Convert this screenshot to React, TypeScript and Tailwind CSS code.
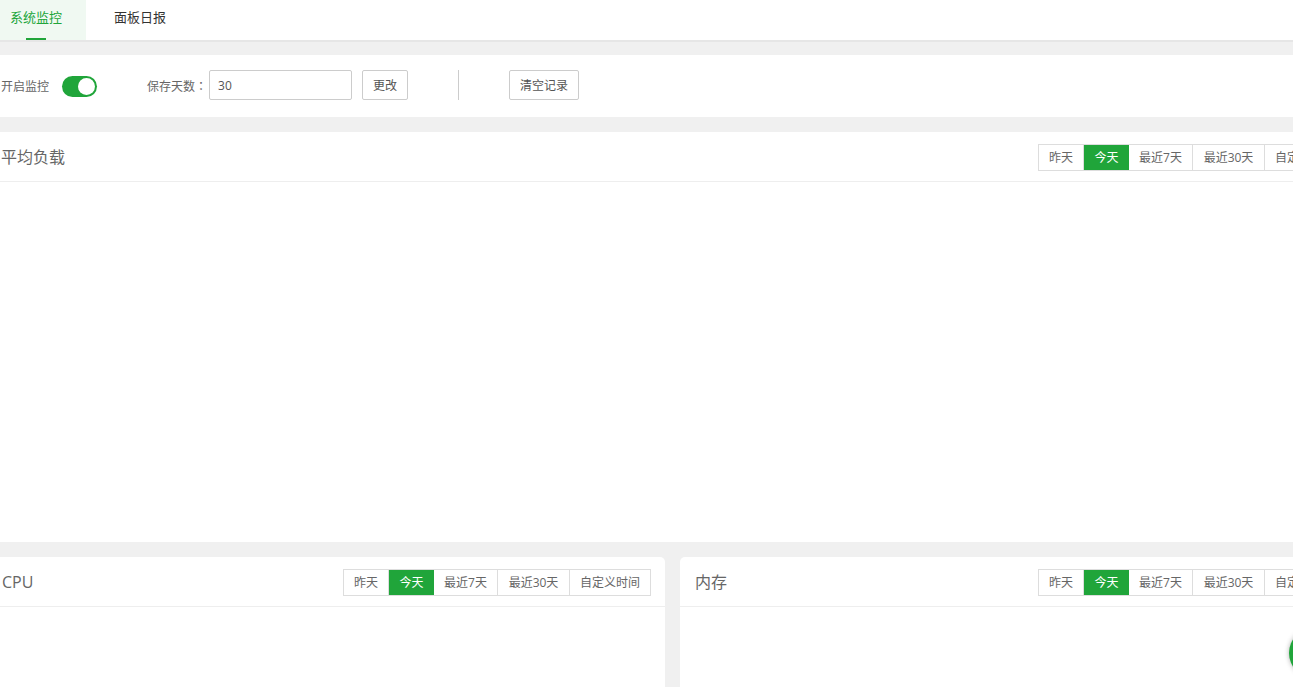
const ranges = [
  { label: "昨天", width: "w-[45px] border-r border-[#ddd]" },
  { label: "今天", width: "w-[45px] bg-[#20a53a] text-white" },
  { label: "最近7天", width: "w-[64px] border-r border-[#ddd]" },
  { label: "最近30天", width: "w-[72px] border-r border-[#ddd]" },
  { label: "自定义时间", width: "w-[80px]" },
];

function RangeTabs() {
  return (
    <div className="mt-px flex h-[27px] shrink-0 border border-[#ddd] text-xs leading-[25px] text-[#666]">
      {ranges.map((range) => (
        <span key={range.label} className={`text-center ${range.width}`}>
          {range.label}
        </span>
      ))}
    </div>
  );
}

function PanelHead({ title, left }: { title: string; left: string }) {
  return (
    <div className="flex h-[50px] items-center justify-between border-b border-[#eee] pr-[14px]">
      <h3 className={`text-base font-normal text-[#666] ${left}`}>{title}</h3>
      <RangeTabs />
    </div>
  );
}

export default function App() {
  return (
    <div className="relative h-[687px] overflow-hidden bg-[#f0f0f0] font-['Open_Sans','Noto_Sans_CJK_SC',sans-serif]">
      <nav className="flex h-[42px] border-b-2 border-[#e6e6e6] bg-white text-[13px] leading-[34px]">
        <a className="relative w-[86px] bg-[#f0f9f2] pl-[10px] text-[#20a53a]">
          系统监控
          <span className="absolute bottom-0 left-[26px] h-[2px] w-5 bg-[#20a53a]" />
        </a>
        <a className="w-[108px] text-center text-[#333]">面板日报</a>
      </nav>

      <section className="mt-[13px] flex h-[62px] items-center bg-white pb-[2px] text-xs text-[#666]">
        <span className="ml-px mt-[4px]">开启监控</span>
        <span className="relative ml-[13px] mt-[2px] h-[21px] w-[35px] rounded-full bg-[#20a53a]">
          <span className="absolute right-[2px] top-[2px] h-[17px] w-[17px] rounded-full bg-white" />
        </span>
        <span className="ml-[50px] mt-[4px] font-['Open_Sans','Noto_Sans_CJK_TC',sans-serif]">保存天数：</span>
        <span className="ml-[2px] h-[30px] w-[143px] rounded-[2px] border border-[#ccc] pl-2 pt-px text-xs leading-[28px] text-[#555]">
          30
        </span>
        <button className="ml-[10px] h-[30px] w-[46px] rounded-[2px] border border-[#ccc] pt-[2px] text-[#555]">
          更改
        </button>
        <span className="ml-[50px] h-[30px] w-px bg-[#ccc]" />
        <button className="ml-[50px] h-[30px] w-[70px] rounded-[2px] border border-[#ccc] pt-[2px] text-[#555]">
          清空记录
        </button>
      </section>

      <section className="mt-[15px] h-[410px] w-[1360px] bg-white">
        <PanelHead title="平均负载" left="ml-px" />
      </section>

      <div className="mt-[15px] flex w-[1360px] gap-[15px]">
        <section className="h-[200px] w-[665px] rounded-tr-[5px] bg-white">
          <PanelHead title="CPU" left="ml-[2px]" />
        </section>
        <section className="h-[200px] w-[680px] rounded-tl-[5px] bg-white">
          <PanelHead title="内存" left="ml-[15px]" />
        </section>
      </div>

      <span className="absolute left-[1289px] top-[628px] h-[50px] w-[50px] rounded-full bg-[#20a53a] shadow-[0_0_5px_rgba(0,0,0,0.3)]" />
    </div>
  );
}
